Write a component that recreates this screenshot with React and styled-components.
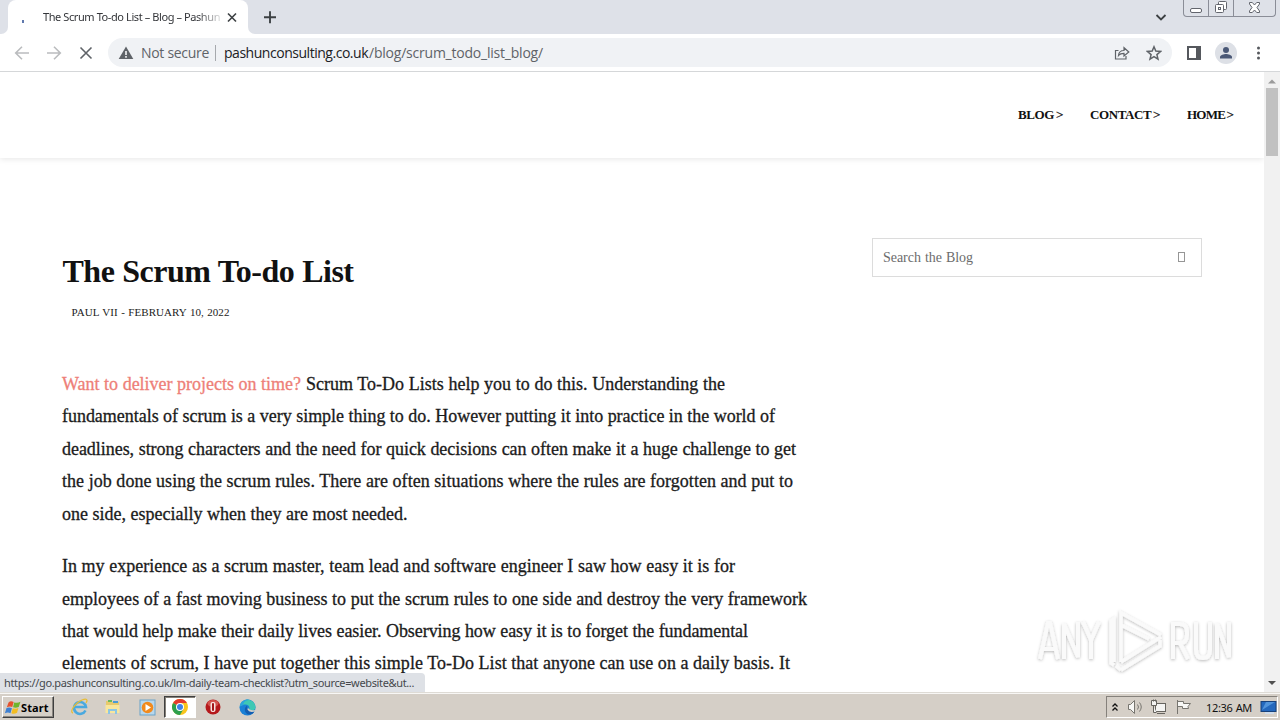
import React from "react";
import styled, { createGlobalStyle } from "styled-components";

const GlobalStyle = createGlobalStyle`
  * { box-sizing: border-box; }
  body { margin: 0; background: #fff; overflow: hidden; }
  svg { display: block; flex: none; }
`;

const ui = `"Noto Sans", "Open Sans", sans-serif`;
const light = `"Open Sans", "Noto Sans", sans-serif`;
const serif = `"Liberation Serif", "Times New Roman", serif`;

const Desktop = styled.div`
  position: relative;
  display: flex;
  flex-direction: column;
  width: 1280px;
  height: 720px;
  overflow: hidden;
  font-family: ${ui};
`;

/* One line of text set to a known measure */
const Fit = styled.span`
  display: block;
  flex: none;
  width: ${(p) => p.$w}px;
  letter-spacing: ${(p) => p.$ls || 0}px;
  text-align: justify;
  text-align-last: justify;
  white-space: nowrap;
`;

/* Browser chrome */
const TabStrip = styled.div`
  display: flex;
  flex: none;
  height: 34px;
  background: #dee1e8;
`;
const StripEdge = styled.div`
  width: 8px;
  background: #fff;
  &::before {
    content: "";
    display: block;
    height: 34px;
    background: #dee1e8;
    border-bottom-${(p) => p.$corner}-radius: 7px;
  }
`;
const Tab = styled.div`
  display: flex;
  align-items: center;
  width: 240px;
  height: 34px;
  padding: 0 8px 0 35px;
  background: #fff;
  border-radius: 8px 8px 0 0;
`;
const TabLoading = styled.i`
  width: 2px;
  height: 3px;
  margin: 8px 0 0 -21px;
  background: #6079ad;
`;
const TabTitle = styled.div`
  width: 180px;
  height: 17px;
  margin: -1px 1px 0 19px;
  font-size: 11px;
  line-height: 17px;
  color: #333539;
  mask-image: linear-gradient(90deg, #000 154px, transparent 182px);
`;
const StripIcons = styled.div`
  display: flex;
  flex: 1;
  align-items: center;
  justify-content: space-between;
  padding: 0 14px 0 0;
  margin-left: -1px;
`;
const WindowButtons = styled.div`
  display: flex;
  width: 93px;
  height: 17px;
  margin-right: 4px;
  border: 1px solid #8a8d97;
  border-top: 0;
  border-radius: 0 0 4px 4px;
`;
const WindowButton = styled.div`
  display: flex;
  align-items: flex-end;
  justify-content: center;
  width: ${(p) => p.$w}px;
  padding-bottom: 2px;
  border-right: ${(p) => (p.$last ? "0" : "1px solid #8a8d97")};
`;
const Toolbar = styled.div`
  display: flex;
  flex: none;
  align-items: center;
  height: 38px;
  padding: 0 14px 0 14px;
  background: #fff;
  border-bottom: 1px solid #d5d7d9;
`;
const NavIcons = styled.div`
  display: flex;
  gap: 16px;
  width: 94px;
`;
const Omnibox = styled.div`
  display: flex;
  align-items: center;
  width: 1064px;
  height: 29px;
  padding: 0 10px 0 10px;
  border-radius: 15px;
  background: #f0f2f5;
  font-size: 14px;
  color: #5f6368;
`;
const Security = styled.div`
  margin: 0 7px 0 7px;
  line-height: 20px;
  font-family: ${light};
`;
const Divider = styled.div`
  width: 1px;
  height: 16px;
  background: #a6a9ad;
`;
const Url = styled.div`
  display: flex;
  flex: 1;
  margin-left: 8px;
  line-height: 20px;
  font-family: ${light};
`;
const Host = styled.span`
  width: 145px;
  color: #202124;
  letter-spacing: -0.47px;
`;
const Path = styled.span`
  letter-spacing: -0.22px;
`;
const OmniIcons = styled.div`
  display: flex;
  gap: 16px;
`;
const ToolIcons = styled.div`
  display: flex;
  flex: 1;
  align-items: center;
  justify-content: space-between;
  padding-left: 14px;
`;
const Avatar = styled.div`
  display: flex;
  align-items: center;
  justify-content: center;
  width: 22px;
  height: 22px;
  background: #dde0e6;
  border-radius: 50%;
`;

/* Web page */
const Viewport = styled.div`
  display: flex;
  height: 620px;
`;
const Page = styled.div`
  width: 1264px;
  height: 620px;
  overflow: hidden;
  background: #fff;
  font-family: ${serif};
`;
const Header = styled.header`
  display: flex;
  justify-content: flex-end;
  gap: 27px;
  height: 86px;
  padding: 34px 31px 0 0;
  box-shadow: 0 1px 6px rgba(0, 0, 0, 0.1);
`;
const MenuLink = styled.a`
  font-size: 13px;
  font-weight: 700;
  line-height: 18px;
  color: #111;
`;
const Chevron = styled.span`
  margin-left: -3px;
  font-weight: 400;
  -webkit-text-stroke: 0.3px currentColor;
`;
const Content = styled.main`
  display: flex;
  justify-content: space-between;
  padding: 80px 62px 0;
`;
const Article = styled.article`
  width: 750px;
`;
const Title = styled.h1`
  margin: 13px 0 0 0.5px;
  font-size: 32px;
  line-height: 40px;
  font-weight: 700;
  color: #111;
`;
const Meta = styled.div`
  margin: 13px 0 0 9.5px;
  font-size: 11px;
  line-height: 16px;
  color: #222;
`;
const Paragraph = styled.p`
  margin: 0 0 19.8px;
  font-size: 18px;
  line-height: 32.45px;
  color: #1b1b1b;
  -webkit-text-stroke: 0.3px currentColor;
`;
const Body = styled.div`
  margin-top: 48px;
`;
const FirstLine = styled.div`
  display: flex;
  gap: 5px;
`;
const Highlight = styled.span`
  color: #ee7f78;
`;
const SearchBox = styled.div`
  display: flex;
  align-items: center;
  justify-content: space-between;
  width: 330px;
  height: 39px;
  padding: 0 16px 0 10px;
  border: 1px solid #dcdcdc;
  font-size: 14px;
  color: #6c6c6c;
`;
const MissingGlyph = styled.i`
  width: 7px;
  height: 10px;
  margin-top: -1px;
  border: 1px solid #969696;
`;
const Scrollbar = styled.div`
  display: flex;
  flex-direction: column;
  align-items: center;
  justify-content: space-between;
  width: 16px;
  height: 620px;
  padding: 7px 0 6px;
  background: #f1f1f1;
`;
const ScrollTop = styled.div`
  display: flex;
  flex-direction: column;
  align-items: center;
  gap: 4px;
`;
const Thumb = styled.div`
  width: 12px;
  height: 68px;
  background: #c1c1c1;
`;
const StatusBubble = styled.div`
  position: absolute;
  left: 0;
  top: 673px;
  width: 425px;
  height: 19px;
  padding-left: 4px;
  border-radius: 0 4px 0 0;
  background: #dee1e6;
  font-size: 11px;
  line-height: 20px;
  color: #45484c;
`;
const Watermark = styled.div`
  position: absolute;
  left: 1030px;
  top: 601px;
`;

/* Taskbar */
const Taskbar = styled.footer`
  position: relative;
  display: flex;
  align-items: center;
  height: 28px;
  padding: 1px 0 0 2px;
  background: #d5cfc7;
  border-top: 1px solid #dedbd5;
  box-shadow: inset 0 1px #f8f7f5;
`;
const Start = styled.div`
  display: flex;
  align-items: center;
  width: 52px;
  height: 22px;
  padding-left: 1px;
  gap: 0;
  border: 1px solid;
  border-color: #fff #3f3f3f #3f3f3f #fff;
  box-shadow: inset -1px -1px #8a8680;
  font-size: 11px;
  font-weight: 700;
  color: #000;
`;
const Launch = styled.div`
  display: flex;
  align-items: center;
  justify-content: center;
  width: ${(p) => p.$w || 34}px;
  height: 22px;
  border: 1px solid transparent;
  ${(p) => p.$active && `
    border-color: #404040 #fff #fff #404040;
    background: #fff;
    box-shadow: inset 1px 1px #858078;
  `}
`;
const Launchers = styled.div`
  display: flex;
  flex: 1;
  padding-left: 9px;
`;
const Tray = styled.div`
  display: flex;
  align-items: center;
  width: 172px;
  height: 22px;
  margin-right: 2px;
  padding: 0 0 0 5px;
  border: 1px solid;
  border-color: #85817b #fff #fff #85817b;
  font-size: 11px;
  color: #111;
`;
const TrayIcons = styled.div`
  display: flex;
  align-items: center;
  gap: 7px;
  flex: 1;
`;
const Clock = styled.div`
  margin-right: 8px;
`;

const Stroke = ({ size = 16, w = 1.6, color = "#5f6368", children }) => (
  <svg width={size} height={size} viewBox="0 0 16 16" fill="none" stroke={color} strokeWidth={w}>
    {children}
  </svg>
);

const TabBar = () => (
  <TabStrip>
    <StripEdge $corner="right" />
    <Tab>
      <TabLoading />
      <TabTitle><Fit $w={176} $ls={-0.41}>The Scrum To-do List – Blog – Pashun</Fit></TabTitle>
      <Stroke color="#3c4043"><path d="M4 4.500l8 8M12 4.500l-8 8" /></Stroke>
    </Tab>
    <StripEdge $corner="left" />
    <StripIcons>
      <Stroke size={30} w={1} color="#3c4043"><path d="M8 4.900v6.400M4.800 8.100h6.400" /></Stroke>
      <Stroke size={16} w={1.8} color="#3c4043"><path d="M3.500 6l4.500 4.500L12.500 6" /></Stroke>
    </StripIcons>
    <WindowButtons>
      <WindowButton $w={25}>
        <svg width="13" height="14"><rect x=".5" y="8.500" width="11" height="4" rx="1.500" fill="#fff" stroke="#62656d" /></svg>
      </WindowButton>
      <WindowButton $w={25}>
        <svg width="14" height="14" fill="#fff" stroke="#62656d">
          <rect x="4.500" y="1.500" width="8" height="8" rx="1" />
          <rect x="1.500" y="4.500" width="8" height="8" rx="1" />
          <rect x="4.500" y="7.500" width="2" height="2" />
        </svg>
      </WindowButton>
      <WindowButton $w={41} $last>
        <svg width="13" height="14" viewBox="0 0 13 14">
          <path d="M1.500 2.500h2.800l2.200 2.500L8.700 2.500h2.800V4L9 7.500l2.500 3.500v1.500H8.700L6.500 10l-2.200 2.500H1.500V11L4 7.500 1.500 4z" fill="#fff" stroke="#62656d" />
        </svg>
      </WindowButton>
    </WindowButtons>
  </TabStrip>
);

const AddressBar = () => (
  <Toolbar>
    <NavIcons>
      <Stroke color="#babcbe"><path d="M15 8H2M8 1.700L1.700 8 8 14.300" /></Stroke>
      <Stroke color="#babcbe"><path d="M1 8h13M8 1.700L14.300 8 8 14.300" /></Stroke>
      <Stroke><path d="M2.500 2.500l11 11M13.500 2.500l-11 11" /></Stroke>
    </NavIcons>
    <Omnibox>
      <svg width="16" height="16" viewBox="0 0 16 16">
        <path d="M8 1.500L15.300 14H.7z" fill="#5f6368" />
        <path d="M8 6v4M8 11v1.700" stroke="#fff" strokeWidth="1.500" />
      </svg>
      <Security><Fit $w={67} $ls={-0.3}>Not secure</Fit></Security>
      <Divider />
      <Url><Host>pashunconsulting.co.uk</Host><Path>/blog/scrum_todo_list_blog/</Path></Url>
      <OmniIcons>
        <Stroke w={1.2}><path d="M4.500 5.500H1.500V14H12v-3M4.500 10.500c.3-3.600 2-5 5.500-5V2.700L14.800 7 10 11V8.300c-2.700 0-4.200.5-5.500 2.200z" /></Stroke>
        <Stroke w={1.5}><path d="M8 1.800l1.800 4.300 4.700.4-3.600 3.100 1.100 4.600L8 11.700l-4 2.500 1.100-4.600L1.500 6.500l4.700-.4z" /></Stroke>
      </OmniIcons>
    </Omnibox>
    <ToolIcons>
      <svg width="16" height="16"><path d="M1 1h14v14H1zM3 3v10h7V3z" fill="#55585d" fillRule="evenodd" /></svg>
      <Avatar>
        <svg width="14" height="14" fill="#4a5876"><circle cx="7" cy="4" r="3" /><path d="M1 12.500v-1.500c0-2 4-3 6-3s6 1 6 3v1.500z" /></svg>
      </Avatar>
      <svg width="16" height="16" fill="#55585d"><circle cx="8.500" cy="3" r="1.500" /><circle cx="8.500" cy="8" r="1.500" /><circle cx="8.500" cy="13" r="1.500" /></svg>
    </ToolIcons>
  </Toolbar>
);

const menu = [["BLOG", 45, -0.4], ["CONTACT", 70, -0.4], ["HOME", 46, -0.75]];
const firstRest = [
  ["fundamentals of scrum is a very simple thing to do. However putting it into practice in the world of", 713, -0.03],
  ["deadlines, strong characters and the need for quick decisions can often make it a huge challenge to get", 734, -0.04],
  ["the job done using the scrum rules. There are often situations where the rules are forgotten and put to", 731, 0.03],
  ["one side, especially when they are most needed.", 345, 0],
];
const second = [
  ["In my experience as a scrum master, team lead and software engineer I saw how easy it is for", 673, 0.02],
  ["employees of a fast moving business to put the scrum rules to one side and destroy the very framework", 745, 0.02],
  ["that would help make their daily lives easier. Observing how easy it is to forget the fundamental", 686, -0.06],
  ["elements of scrum, I have put together this simple To-Do List that anyone can use on a daily basis. It", 728, 0.02],
];

const WebPage = () => (
  <Page>
    <Header>
      {menu.map(([label, w, ls]) => (
        <MenuLink key={label}><Fit $w={w} $ls={ls}>{label} <Chevron>&gt;</Chevron></Fit></MenuLink>
      ))}
    </Header>
    <Content>
      <Article>
        <Title><Fit $w={291} $ls={-0.5}>The Scrum To-do List</Fit></Title>
        <Meta><Fit $w={158} $ls={0.06}>PAUL VII - FEBRUARY 10, 2022</Fit></Meta>
        <Body>
          <Paragraph as="div">
            <FirstLine>
              <Highlight><Fit $w={239} $ls={-0.02}>Want to deliver projects on time?</Fit></Highlight>
              <Fit $w={419} $ls={0.01}>Scrum To-Do Lists help you to do this. Understanding the</Fit>
            </FirstLine>
            {firstRest.map(([t, w, ls]) => <Fit key={t} $w={w} $ls={ls}>{t}</Fit>)}
          </Paragraph>
          <Paragraph>
            {second.map(([t, w, ls]) => <Fit key={t} $w={w} $ls={ls}>{t}</Fit>)}
          </Paragraph>
        </Body>
      </Article>
      <SearchBox><Fit $w={90} $ls={-0.03}>Search the Blog</Fit><MissingGlyph /></SearchBox>
    </Content>
  </Page>
);

const AnyRun = () => (
  <Watermark>
    <svg width="210" height="80" viewBox="0 0 210 80" fill="none">
      <defs>
        <filter id="soft" x="-10%" y="-20%" width="120%" height="140%">
          <feDropShadow dx="0" dy="1" stdDeviation="1.800" floodColor="#000" floodOpacity="0.28" />
        </filter>
      </defs>
      <g filter="url(#soft)" stroke="#fafafa" strokeWidth="4">
        <path d="M10 58l8-36h2l8 36M12 48h14M34 58V23l14 33V21M53 21l8 18 8-18M61 39v19" />
        <path d="M143 58V23h7q7 0 7 8v3q0 8-7 8h-7M150 42l8 16M166 21v28q0 8 7 8t7-8V21M187 58V23l12 33V21" />
        <path d="M91 44V12l40 22M84 61V18l-3 2v42l3 2M91 61l40-25M91 61V24l28 14" strokeWidth="3.500" />
        <path d="M91 69l39-24v-6M91 69l-5-4" strokeWidth="3.500" />
      </g>
    </svg>
  </Watermark>
);

const StartFlag = () => (
  <svg width="17" height="17" viewBox="0 1 15 13">
    <path d="M4 3q2-1.800 4.500-.3L7.300 7Q5 6 2.500 7.300z" fill="#e5522d" />
    <path d="M9 3q3 1 5.500-.5L13 7Q10.500 8.200 8 7.300z" fill="#6fb52c" />
    <path d="M2.200 8q2.500-1 4.800.2l-1.300 4.300Q3.500 11.300.8 12.500z" fill="#3e80d2" />
    <path d="M7.700 8.200q2.500 1 5-.3l-1.200 4.300q-2.500 1.500-5 .4z" fill="#f3bd22" />
  </svg>
);
const ExplorerE = () => (
  <svg width="18" height="18" viewBox="0 0 18 18" fill="none">
    <path d="M14.500 12.500A6 6 0 1 1 15 9H4" stroke="#4aa9df" strokeWidth="2.500" />
    <path d="M2 15c-4-1 2-10 9-13 5-2 6 0 4 3" stroke="#e8bd35" strokeWidth="1.300" />
  </svg>
);
const Folder = () => (
  <svg width="18" height="18" viewBox="0 0 18 18">
    <path d="M2 3h5l1 1h7v10H2z" fill="#e7ca6c" />
    <path d="M4 2h4v2H4z" fill="#68b95e" /><path d="M9 3h5v2H9z" fill="#4a9bd6" />
    <path d="M1.500 7h14v8h-14z" fill="#f8e69c" />
    <path d="M4 16v-5h9v5h-2v-3H6v3z" fill="#8cc6e4" />
  </svg>
);
const MediaPlayer = () => (
  <svg width="17" height="17" viewBox="0 0 17 17">
    <rect x="1" y="1" width="15" height="15" fill="#b8d7ec" stroke="#6ba3c9" />
    <circle cx="8.500" cy="8.500" r="5.800" fill="#f18a1d" /><path d="M6.500 5v7l5.500-3.500z" fill="#fff" />
  </svg>
);
const Chrome = () => (
  <svg width="16" height="16" viewBox="0 0 16 16">
    <circle cx="8" cy="8" r="8" fill="#f9c51d" />
    <path d="M8 8L1.070 4A8 8 0 0 1 14.930 4H8z" fill="#e33b2e" />
    <path d="M1.070 4A8 8 0 0 0 8 16l3.500-6L8 8z" fill="#2da04e" />
    <circle cx="8" cy="8" r="4" fill="#fff" /><circle cx="8" cy="8" r="3" fill="#3e82e8" />
  </svg>
);
const Opera = () => (
  <svg width="16" height="16" viewBox="0 0 16 16">
    <circle cx="8" cy="8" r="7.500" fill="#b5191c" /><ellipse cx="8" cy="4.500" rx="5.500" ry="3.500" fill="#d4544f" />
    <rect x="5.500" y="3" width="5" height="10" rx="2" fill="#f7e5e1" /><rect x="7" y="4" width="2" height="8" rx="1" fill="#a3161a" />
  </svg>
);
const Edge = () => (
  <svg width="17" height="17" viewBox="0 0 17 17">
    <circle cx="8.500" cy="8.500" r="8" fill="#1a80d6" />
    <path d="M.7 7.500C2-1 15-2 16.500 8c0 4-5 4.500-6.500 2.500 2-4-3-7-9.300-3z" fill="#3fc8b4" />
    <path d="M.7 7.500C2 1 8-.5 11 1 6 1 4 4 4.500 6z" fill="#2ba5dc" />
    <path d="M8 6.500c-3 2-3 7 1 9 3 .5 5-1 6.500-3-3 1.500-6.500 0-7-2.500z" fill="#145db0" />
    <path d="M9 8.500q1 3.500 7.500 2.500l-.5 1.500q-6 1.500-7.500-2z" fill="#d5cfc7" />
  </svg>
);

const BottomBar = () => (
  <Taskbar>
    <Start><StartFlag /><Fit $w={29} $ls={0.1}>Start</Fit></Start>
    <Launchers>
      <Launch $w={33}><ExplorerE /></Launch>
      <Launch><Folder /></Launch>
      <Launch><MediaPlayer /></Launch>
      <Launch $w={32} $active><Chrome /></Launch>
      <Launch><Opera /></Launch>
      <Launch><Edge /></Launch>
    </Launchers>
    <Tray>
      <TrayIcons>
        <svg width="6" height="10" fill="none" stroke="#111" strokeWidth="1.300"><path d="M.5 4.500L3 2l2.500 2.500M.5 8.500L3 6l2.500 2.500" /></svg>
        <svg width="18" height="16" fill="none" stroke="#77756f">
          <path d="M3.500 5.500h2l4-4v13l-4-4h-2z" fill="#f7f7f5" /><path d="M12.500 5.500q2 2.500 0 5M14.500 3.500q3.500 4.500 0 9" />
        </svg>
        <svg width="17" height="16" fill="#f4f4f2" stroke="#66645f">
          <rect x="5.500" y="4.500" width="10" height="8" /><path d="M7 14.500h8M1.500 1.500h5v5h-5zM3.500 6.500v7h3M3.500 .5v2M5.500 .5v2" />
        </svg>
        <svg width="18" height="16" fill="#f8f8f6" stroke="#77756f">
          <path d="M3.500 2.500h6v2h7l-2.500 3 .5 2h-6v-2h-5zM3.500 1v14" />
        </svg>
      </TrayIcons>
      <Clock><Fit $w={46} $ls={-0.35}>12:36 AM</Fit></Clock>
      <svg width="17" height="16" viewBox="0 0 17 16">
        <rect x="1" y="2.500" width="15" height="10" fill="#2468bd" stroke="#17417b" />
        <path d="M2 11l4-8h9z" fill="#5194db" /><path d="M5 14h9" stroke="#cfdceb" strokeWidth="2" />
      </svg>
    </Tray>
  </Taskbar>
);

export default function App() {
  return (
    <Desktop>
      <GlobalStyle />
      <TabBar />
      <AddressBar />
      <Viewport>
        <WebPage />
        <Scrollbar>
          <ScrollTop>
            <svg width="8" height="5"><path d="M0 4.500L4 .5l4 4z" fill="#9b9b9b" /></svg>
            <Thumb />
          </ScrollTop>
          <svg width="8" height="5"><path d="M0 0l4 4 4-4z" fill="#505050" /></svg>
        </Scrollbar>
      </Viewport>
      <StatusBubble><Fit $w={411} $ls={-0.36}>https://go.pashunconsulting.co.uk/lm-daily-team-checklist?utm_source=website&amp;ut...</Fit></StatusBubble>
      <AnyRun />
      <BottomBar />
    </Desktop>
  );
}
